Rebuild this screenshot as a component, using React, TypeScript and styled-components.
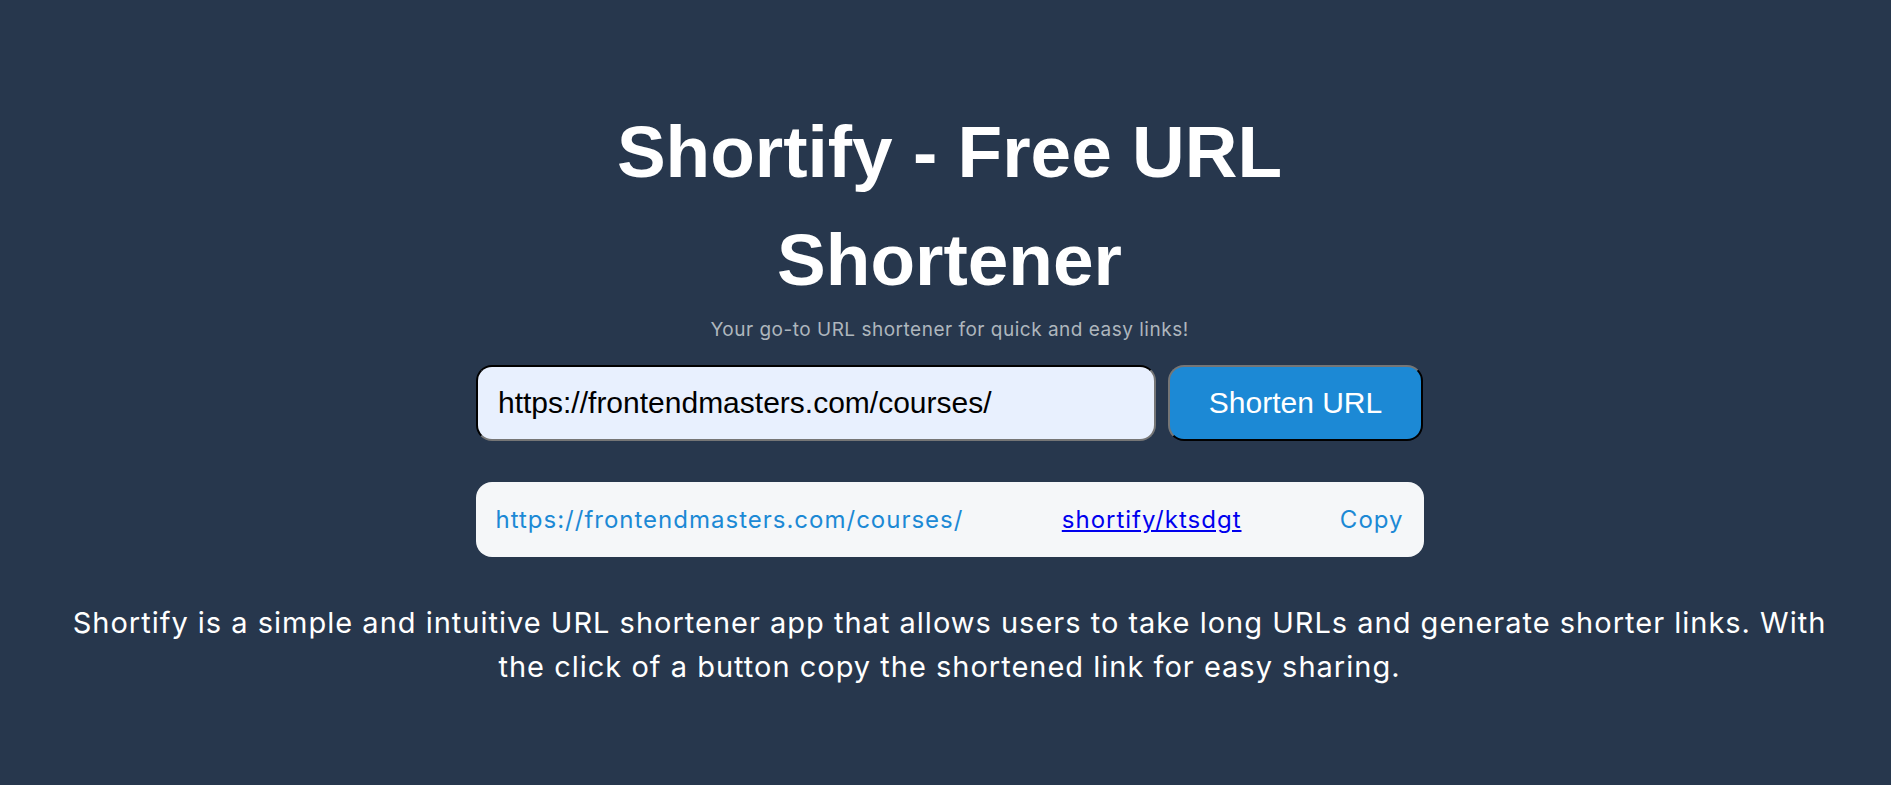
import React from "react";
import styled, { createGlobalStyle } from "styled-components";

const GlobalStyle = createGlobalStyle`
  html, body {
    margin: 0;
    padding: 0;
    background: #27374d;
  }
  body {
    font-family: "Inter", "Noto Sans", sans-serif;
    color: #ffffff;
  }
  * { box-sizing: border-box; }
`;

const Page = styled.main`
  min-height: 785px;
  padding: 98px 0 0 8px;
  display: flex;
  flex-direction: column;
  align-items: center;
  text-align: center;
`;

const Title = styled.h1`
  margin: 0;
  max-width: 960px;
  font-family: "Liberation Sans", Arial, sans-serif;
  font-weight: 700;
  font-size: 73px;
  line-height: 108px;
  color: #ffffff;
`;

const Subtitle = styled.p`
  margin: 2px 0 0;
  font-size: 19px;
  letter-spacing: 0.5px;
  line-height: 27px;
  color: #aeb6bd;
`;

const Form = styled.form`
  margin-top: 22px;
  display: flex;
  gap: 12px;
  width: 947px;
`;

const UrlInput = styled.input`
  flex: 0 0 680px;
  height: 76px;
  padding: 0 20px;
  border: 2px inset #767676;
  border-top-color: #2a2a2a;
  border-left-color: #3a3a3a;
  border-radius: 16px;
  background: #e8f0fe;
  font-family: "Liberation Sans", Arial, sans-serif;
  font-size: 30px;
  color: #000000;
  outline: none;
`;

const ShortenButton = styled.button`
  flex: 1;
  height: 76px;
  border: 2px outset #767676;
  border-bottom-color: #000000;
  border-right-color: #000000;
  border-radius: 16px;
  background: #1c89d5;
  color: #ffffff;
  font-family: "Liberation Sans", Arial, sans-serif;
  font-size: 30px;
  cursor: pointer;
`;

const ResultCard = styled.div`
  margin-top: 41px;
  width: 948px;
  height: 75px;
  padding: 0 20px;
  display: flex;
  align-items: center;
  justify-content: space-between;
  background: #f5f7f9;
  border-radius: 16px;
  font-size: 24px;
  letter-spacing: 1px;
`;

const LongUrl = styled.span`
  color: #1c89d5;
`;

const ShortLink = styled.a`
  color: #0000ee;
  text-decoration: underline;
`;

const CopyButton = styled.span`
  color: #1c89d5;
  cursor: pointer;
`;

const Description = styled.p`
  margin: 44px 0 0;
  max-width: 1785px;
  font-size: 29px;
  letter-spacing: 1px;
  line-height: 44px;
  color: #ffffff;
`;

export default function App() {
  return (
    <>
      <GlobalStyle />
      <Page>
        <Title>Shortify - Free URL Shortener</Title>
        <Subtitle>Your go-to URL shortener for quick and easy links!</Subtitle>
        <Form onSubmit={(e) => e.preventDefault()}>
          <UrlInput
            type="text"
            defaultValue="https://frontendmasters.com/courses/"
          />
          <ShortenButton type="submit">Shorten URL</ShortenButton>
        </Form>
        <ResultCard>
          <LongUrl>https://frontendmasters.com/courses/</LongUrl>
          <ShortLink href="#">shortify/ktsdgt</ShortLink>
          <CopyButton>Copy</CopyButton>
        </ResultCard>
        <Description>
          Shortify is a simple and intuitive URL shortener app that allows users
          to take long URLs and generate shorter links. With the click of a
          button copy the shortened link for easy sharing.
        </Description>
      </Page>
    </>
  );
}
